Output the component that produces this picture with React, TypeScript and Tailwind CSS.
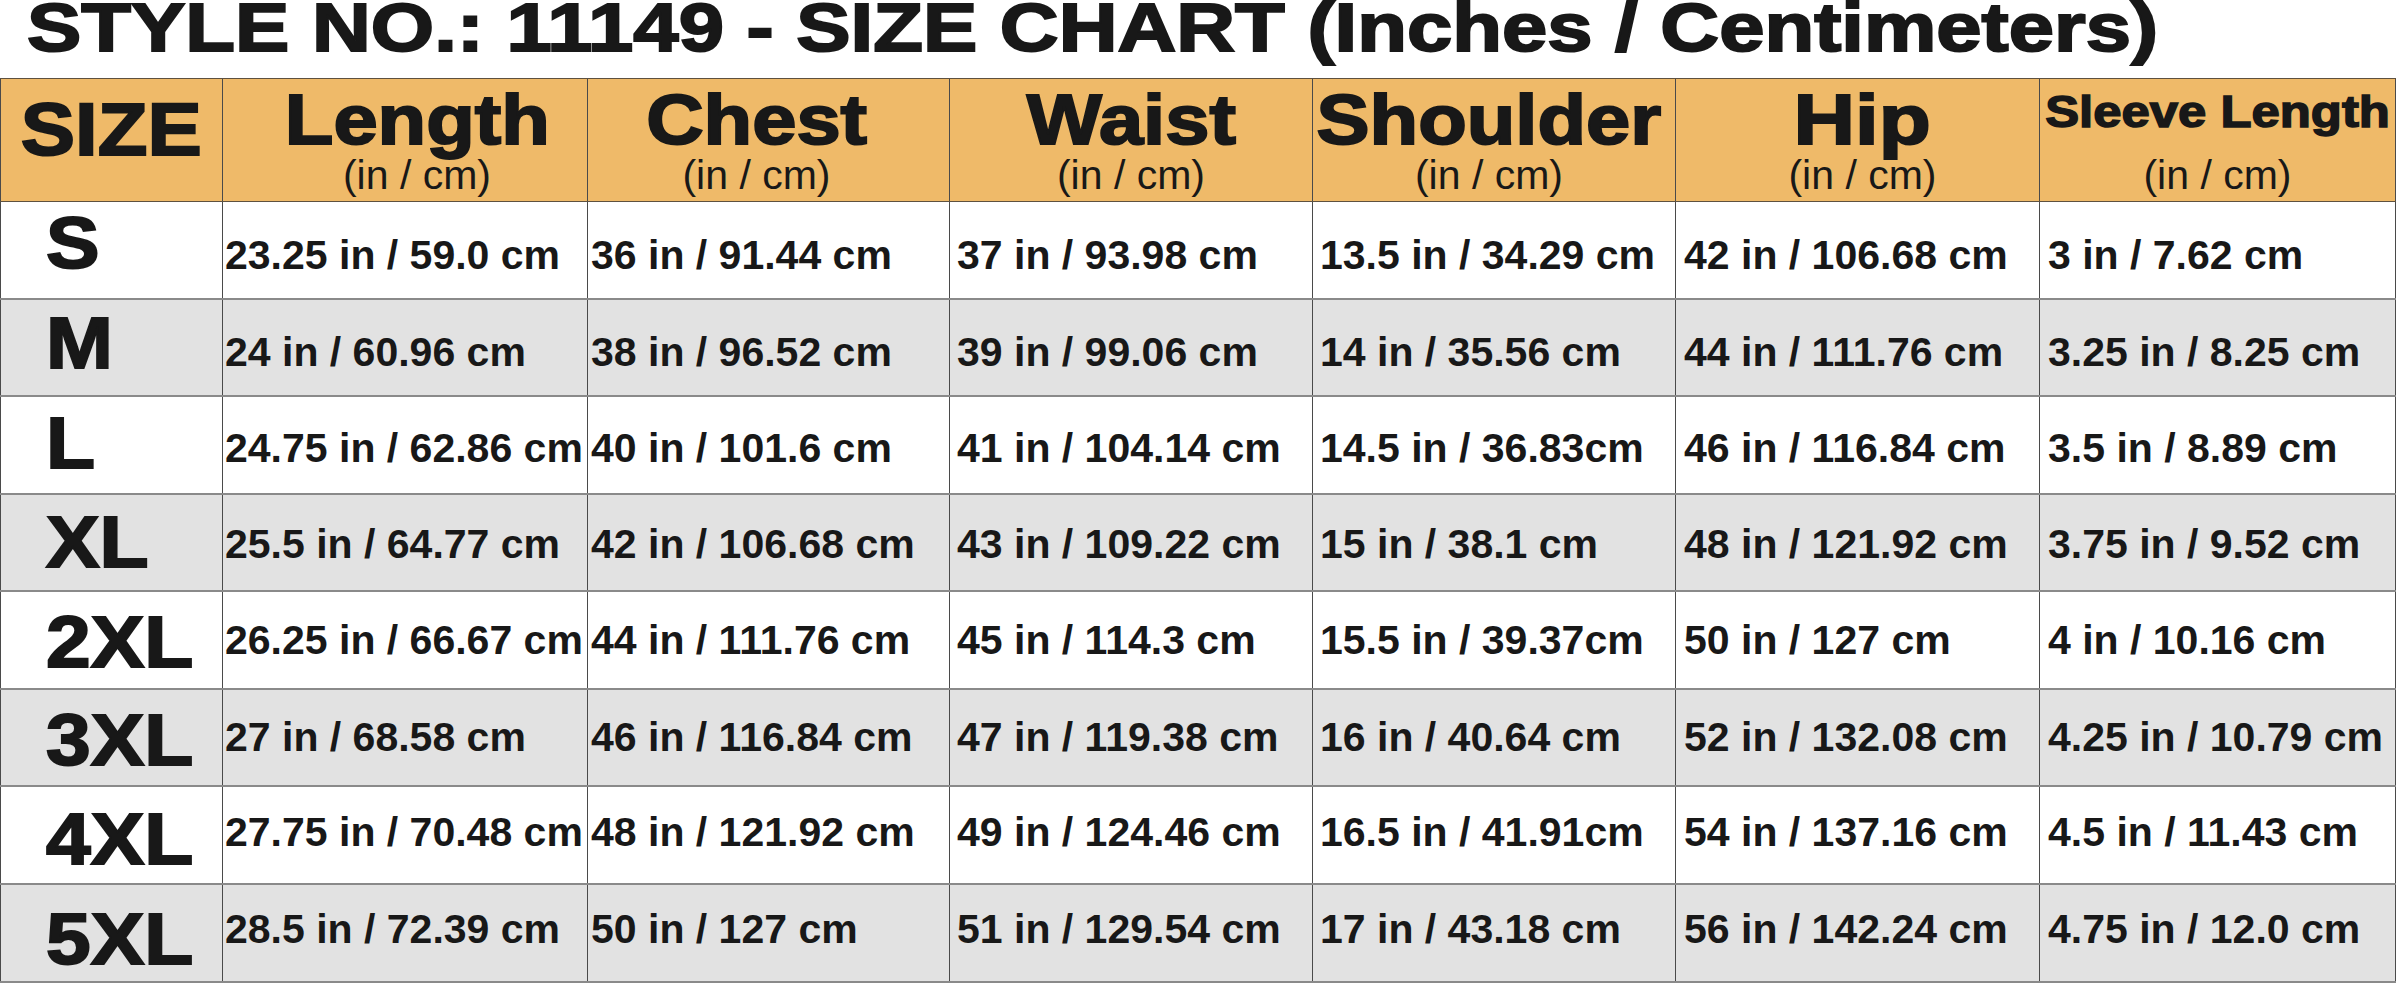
const sizes = [
  {
    size: 'S',
    values: ['23.25 in / 59.0 cm', '36 in / 91.44 cm', '37 in / 93.98 cm', '13.5 in / 34.29 cm', '42 in / 106.68 cm', '3 in / 7.62 cm'],
  },
  {
    size: 'M',
    values: ['24 in / 60.96 cm', '38 in / 96.52 cm', '39 in / 99.06 cm', '14 in / 35.56 cm', '44 in / 111.76 cm', '3.25 in / 8.25 cm'],
  },
  {
    size: 'L',
    values: ['24.75 in / 62.86 cm', '40 in / 101.6 cm', '41 in / 104.14 cm', '14.5 in / 36.83cm', '46 in / 116.84 cm', '3.5 in / 8.89 cm'],
  },
  {
    size: 'XL',
    values: ['25.5 in / 64.77 cm', '42 in / 106.68 cm', '43 in / 109.22 cm', '15 in / 38.1 cm', '48 in / 121.92 cm', '3.75 in / 9.52 cm'],
  },
  {
    size: '2XL',
    values: ['26.25 in / 66.67 cm', '44 in / 111.76 cm', '45 in / 114.3 cm', '15.5 in / 39.37cm', '50 in / 127 cm', '4 in / 10.16 cm'],
  },
  {
    size: '3XL',
    values: ['27 in / 68.58 cm', '46 in / 116.84 cm', '47 in / 119.38 cm', '16 in / 40.64 cm', '52 in / 132.08 cm', '4.25 in / 10.79 cm'],
  },
  {
    size: '4XL',
    values: ['27.75 in / 70.48 cm', '48 in / 121.92 cm', '49 in / 124.46 cm', '16.5 in / 41.91cm', '54 in / 137.16 cm', '4.5 in / 11.43 cm'],
  },
  {
    size: '5XL',
    values: ['28.5 in / 72.39 cm', '50 in / 127 cm', '51 in / 129.54 cm', '17 in / 43.18 cm', '56 in / 142.24 cm', '4.75 in / 12.0 cm'],
  },
]

// heights alternate so the 8 rows fill down to the bottom edge
const rowHeights = ['h-[98px]', 'h-[97px]', 'h-[98px]', 'h-[97px]', 'h-[98px]', 'h-[97px]', 'h-[98px]', 'h-[98px]']

// the chart isn't perfectly centred: labels drift down, values drift up row by row
const labelNudge = ['pb-[16px]', 'pb-[10px]', 'pb-[6px]', 'pb-[2px]', 'pt-[2px]', 'pt-[4px]', 'pt-[6px]', 'pt-[10px]']
const valueNudge = ['pt-[10px]', 'pt-[10px]', 'pt-[6px]', 'pt-[4px]', 'pb-[0px]', 'pb-[1px]', 'pb-[5px]', 'pb-[7px]']

// left padding of the value text, per measurement column
const valuePad = ['pl-[2px]', 'pl-[3px]', 'pl-[7px]', 'pl-[7px]', 'pl-[8px]', 'pl-[8px]']

const grid = 'grid grid-cols-[223px_365px_362px_363px_363px_364px_356px]'
const heavy = '[-webkit-text-stroke:2px_#181818]'

const headers = [
  { label: 'Length', shift: 'pl-[24px]', stretch: 'scale-x-[1.12]' },
  { label: 'Chest', shift: 'pr-[24px]', stretch: 'scale-x-[1.12]' },
  { label: 'Waist', shift: '', stretch: 'scale-x-[1.12]' },
  { label: 'Shoulder', shift: 'pr-[10px]', stretch: 'scale-x-[1.12]' },
  { label: 'Hip', shift: 'pl-[10px]', stretch: 'scale-x-[1.2]' },
]

export default function App() {
  return (
    <div className="w-[2400px] h-[985px] overflow-hidden bg-white text-[#181818] font-['Liberation_Sans',Arial,sans-serif]">
      {/* Title */}
      <div className="h-[78px] pl-[27px]">
        <h1 className={`inline-block origin-left scale-x-[1.18] whitespace-nowrap text-[69px] leading-[56px] font-bold ${heavy}`}>
          STYLE NO.: 11149 - SIZE CHART (Inches / Centimeters)
        </h1>
      </div>

      <div className="w-[2396px]">
        {/* Header row */}
        <div className={`${grid} h-[124px] bg-[#EFBA69] border-t border-b border-[#5e5140]`}>
          <div className="flex justify-center border-l border-r border-[#4a4a4a] pt-[14px]">
            <span className={`inline-block scale-x-[1.1] text-[74px] leading-[74px] font-bold ${heavy}`}>SIZE</span>
          </div>
          {headers.map(h => (
            <div key={h.label} className={`flex flex-col items-center border-r border-[#4a4a4a] pt-[5px] ${h.shift}`}>
              <div className="h-[71px] flex justify-center">
                <span className={`inline-block ${h.stretch} whitespace-nowrap text-[71px] leading-[71px] font-bold ${heavy}`}>
                  {h.label}
                </span>
              </div>
              <span className="text-[41px] leading-[41px] whitespace-nowrap">(in / cm)</span>
            </div>
          ))}
          <div className="flex flex-col items-center border-r border-[#4a4a4a] pt-[5px]">
            <div className="h-[71px] flex justify-center">
              <span className="mt-[5px] inline-block scale-x-[1.13] whitespace-nowrap text-[45px] leading-[45px] font-bold [-webkit-text-stroke:1.5px_#181818]">
                Sleeve Length
              </span>
            </div>
            <span className="text-[41px] leading-[41px] whitespace-nowrap">(in / cm)</span>
          </div>
        </div>

        {/* Size rows */}
        {sizes.map((row, i) => (
          <div
            key={row.size}
            className={`${grid} ${rowHeights[i]} border-b-2 border-[#8a8a8a] ${i % 2 === 1 ? 'bg-[#E2E2E2]' : 'bg-white'}`}
          >
            <div className={`flex items-center border-l border-r border-[#4a4a4a] pl-[45px] ${labelNudge[i]}`}>
              <span className={`inline-block origin-left scale-x-[1.1] text-[73px] leading-[73px] font-bold ${heavy}`}>
                {row.size}
              </span>
            </div>
            {row.values.map((v, j) => (
              <div key={j} className={`flex items-center border-r border-[#4a4a4a] ${valuePad[j]} ${valueNudge[i]}`}>
                <span className="whitespace-nowrap text-[41px] leading-[41px] font-bold">{v}</span>
              </div>
            ))}
          </div>
        ))}
      </div>
    </div>
  )
}
